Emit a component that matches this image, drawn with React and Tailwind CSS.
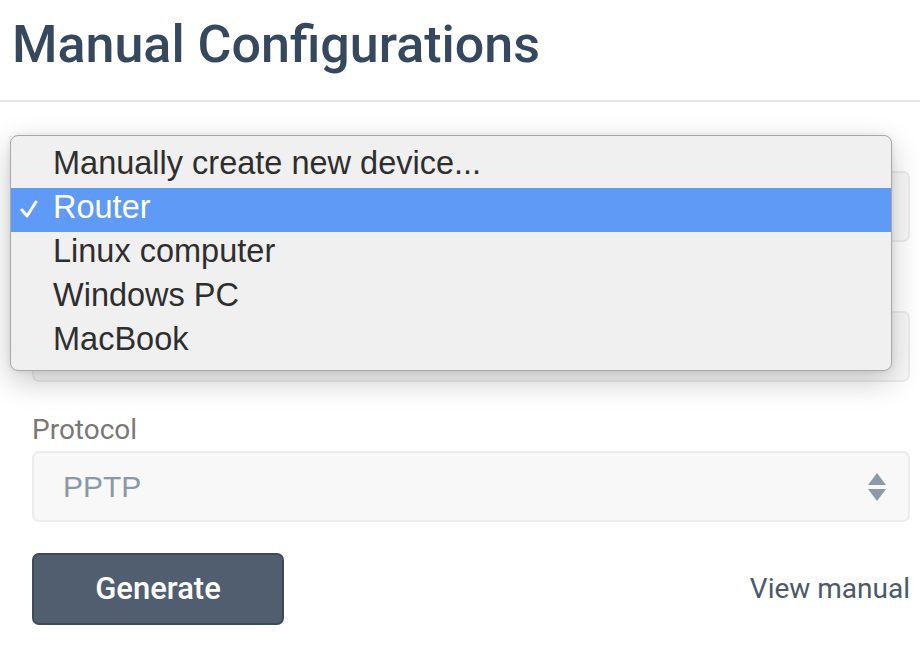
import React from 'react';

const menuItems = ['Manually create new device...', 'Router', 'Linux computer', 'Windows PC', 'MacBook'];

const SelectArrows = () => (
    <svg width="18" height="28" viewBox="0 0 18 28" className="shrink-0">
        <path d="M9 0 L18 12 H0 Z" fill="#8c99a8" />
        <path d="M0 16 H18 L9 28 Z" fill="#8c99a8" />
    </svg>
);

// label/value may be empty: the open popup covers the first two fields
const Field = ({ label, value }) => (
    <div className="mb-[33px]">
        <div className="h-[30px] text-[28px] leading-[30px] text-[#7a7875] mb-[6px]">{label}</div>
        <div className="h-[71px] flex items-center justify-between bg-[#f8f8f8] border-2 border-[#ececec] rounded-[7px] pl-[29px] pr-[22px]">
            <span className="text-[30px] text-[#8a98a8] font-['Liberation_Sans',Arial,sans-serif]">{value}</span>
            <SelectArrows />
        </div>
    </div>
);

export default function App() {
    return (
        <div className="relative w-[920px] h-[650px] bg-white overflow-hidden font-['Roboto',sans-serif]">
            {/* Header */}
            <div className="h-[102px] border-b-2 border-[#e6e6e6] pl-[12px] pt-[14px]">
                <h1 className="text-[52px] leading-[61px] font-medium text-[#35485d]">Manual Configurations</h1>
            </div>

            {/* Form */}
            <div className="pl-[32px] pr-[10px] pt-[33px]">
                <Field label="" value="" />
                <Field label="" value="" />
                <Field label="Protocol" value="PPTP" />

                <div className="flex items-center justify-between -mt-[2px]">
                    <button className="w-[252px] h-[72px] bg-[#505e6f] border-2 border-[#3d4a5a] rounded-[7px] text-white text-[31px] font-medium">
                        Generate
                    </button>
                    <a className="text-[28px] text-[#4b596b]">View manual</a>
                </div>
            </div>

            {/* Native popup menu, open over the device select */}
            <div className="absolute left-[10px] top-[135px] w-[882px] h-[236px] rounded-[8px] border border-[#a8a8a8] bg-[#f0f0f0] pt-[8px] shadow-[0_10px_30px_rgba(0,0,0,0.22),0_0_6px_rgba(0,0,0,0.08)] font-['Liberation_Sans',Arial,sans-serif]">
                {menuItems.map((item) => {
                    const active = item === 'Router';
                    return (
                        <div
                            key={item}
                            className={`relative h-[44px] leading-[38px] pl-[42px] text-[32.5px] ${active ? 'bg-[#5f9af6] text-white' : 'text-[#2e2e2e]'}`}
                        >
                            {active && (
                                <svg width="18" height="18" viewBox="0 0 18 18" className="absolute left-[9px] top-[12px]">
                                    <path d="M2 10 L7 16 L16 2" fill="none" stroke="white" strokeWidth="3" strokeLinecap="round" strokeLinejoin="round" />
                                </svg>
                            )}
                            {item}
                        </div>
                    );
                })}
            </div>
        </div>
    );
}
